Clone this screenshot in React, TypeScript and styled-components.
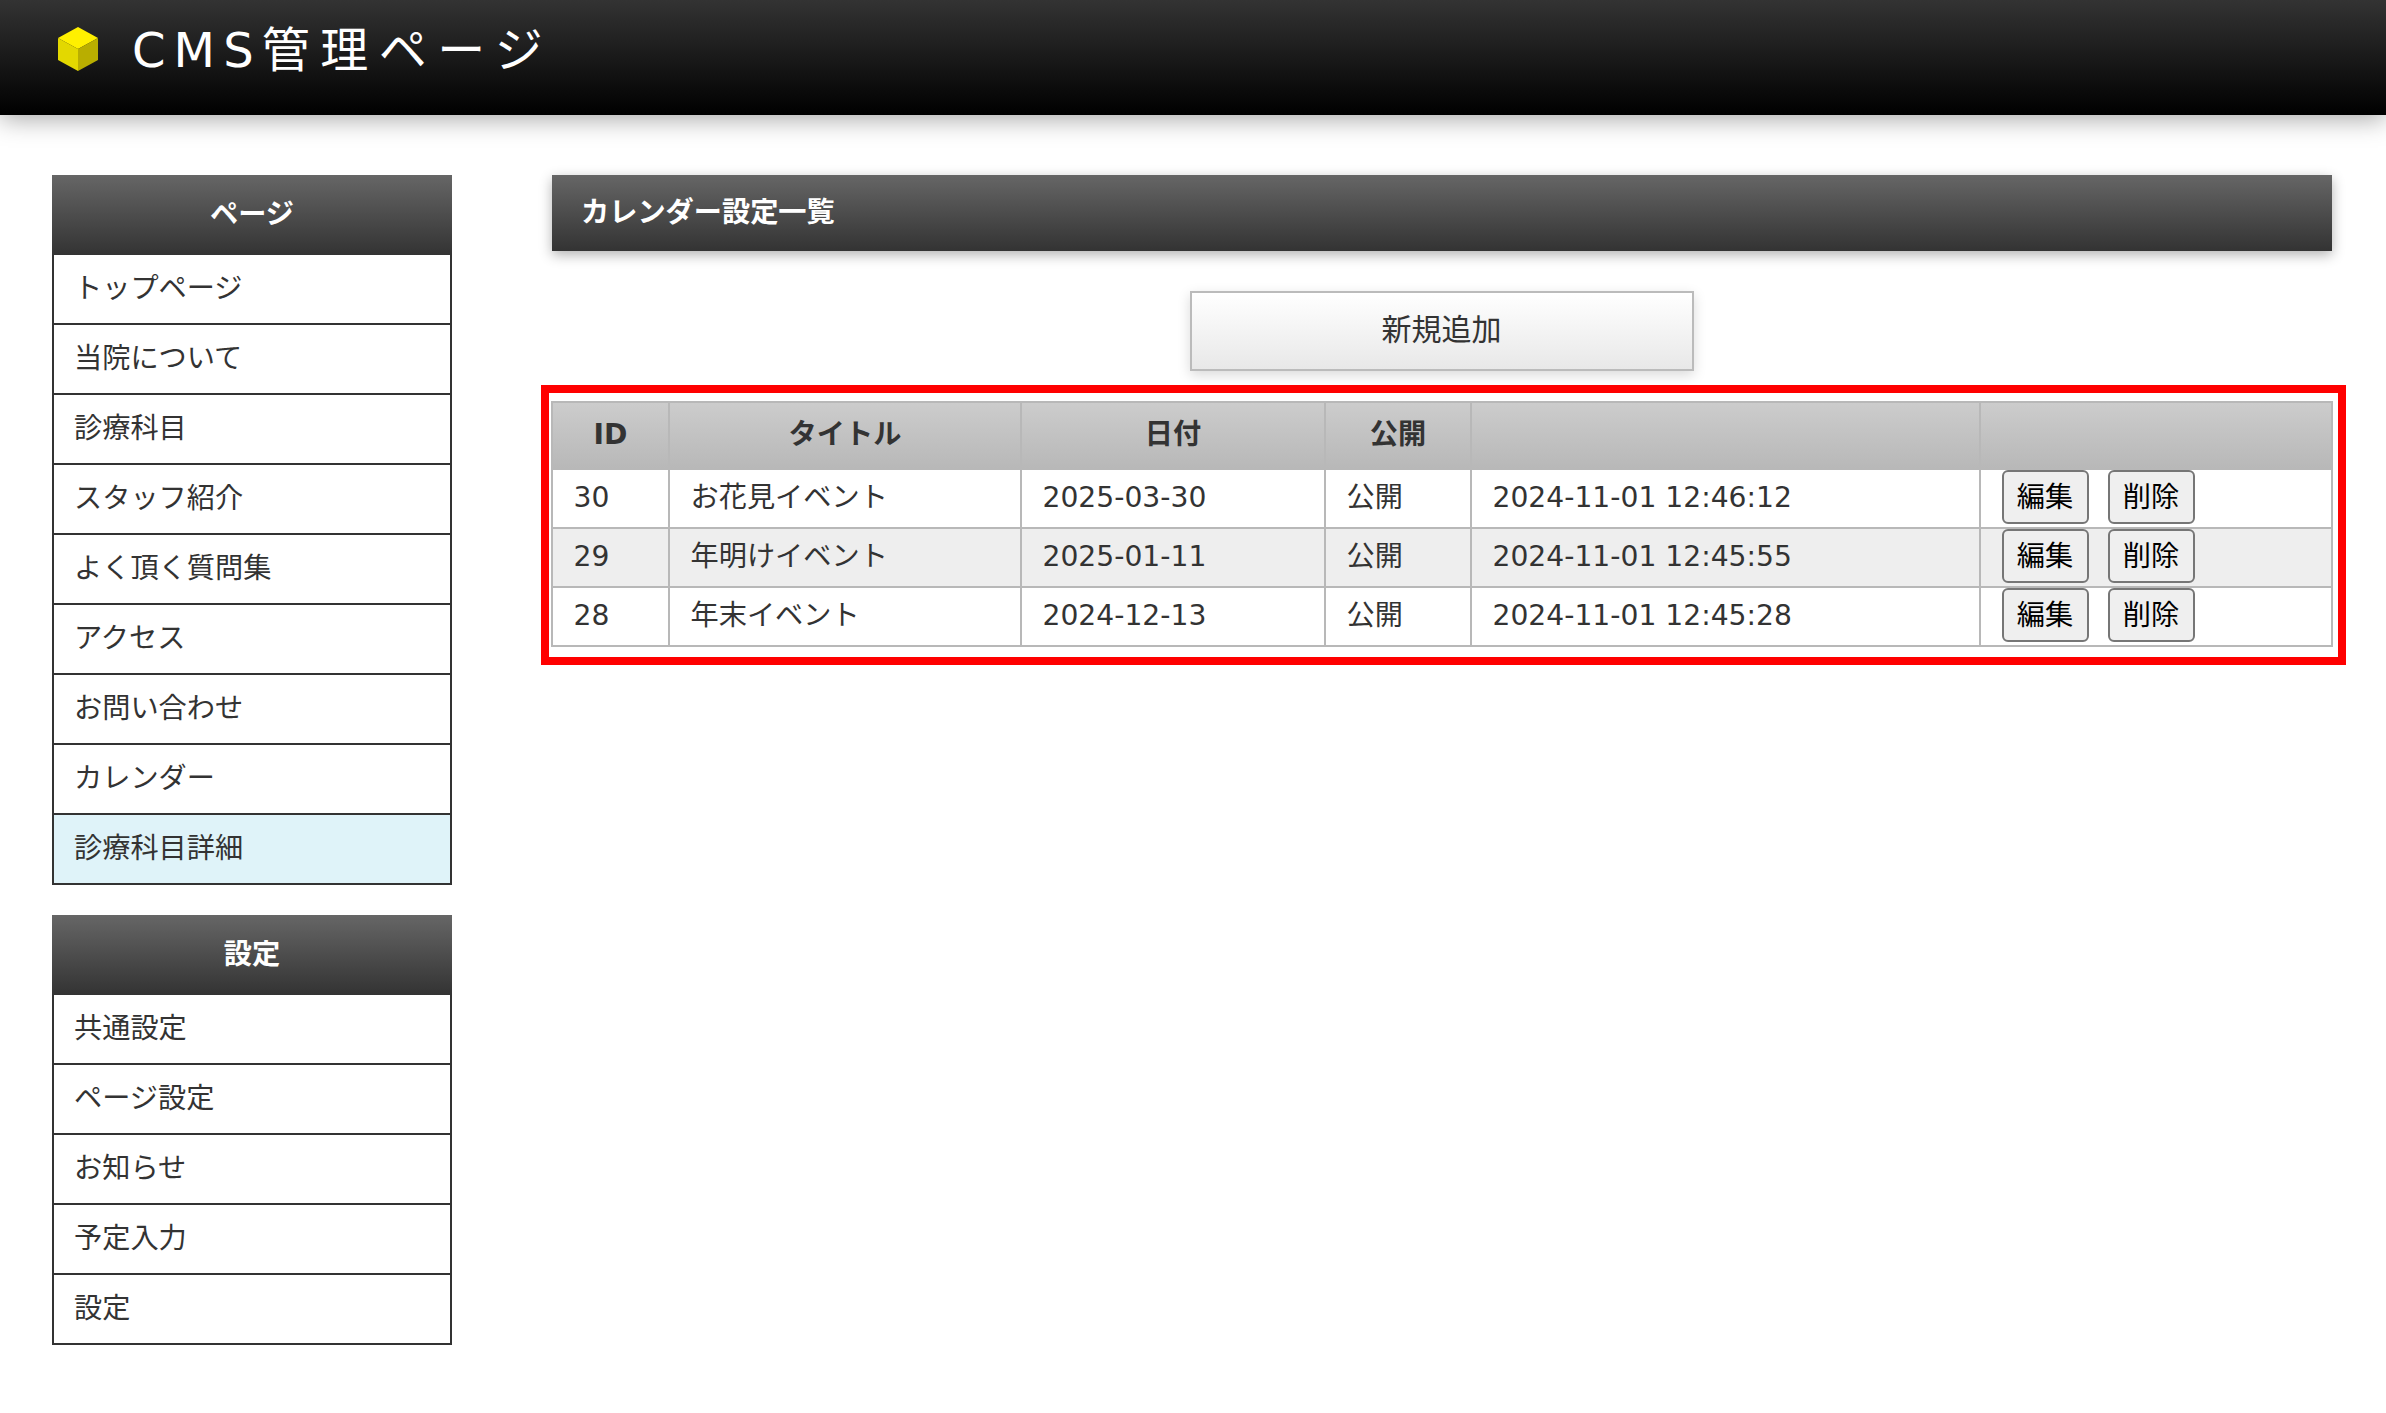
import styled, { createGlobalStyle } from "styled-components";

const FONT = `"DejaVu Sans", "Noto Sans CJK JP", sans-serif`;

const GlobalStyle = createGlobalStyle`
  html, body {
    margin: 0;
    padding: 0;
    background: #fff;
  }
  body {
    font-family: ${FONT};
    font-size: 28.2px;
    color: #333;
  }
`;

const Header = styled.header`
  display: flex;
  align-items: flex-start;
  height: 115px;
  padding: 27px 0 0 58px;
  box-sizing: border-box;
  background: linear-gradient(#333, #000);
  box-shadow: 0 4px 24px rgba(0, 0, 0, 0.35);
`;

const SiteTitle = styled.h1`
  margin: -3px 0 0 34px;
  font-size: 48px;
  line-height: 52px;
  font-weight: normal;
  letter-spacing: 10.5px;
  white-space: nowrap;
  color: #fff;
`;

const Latin = styled.span`
  letter-spacing: 8.1px;
`;

const Layout = styled.div`
  display: flex;
  align-items: flex-start;
  padding: 60px 0 0 52px;
`;

const Sidebar = styled.nav`
  display: flex;
  flex-direction: column;
  gap: 30px;
  width: 400px;
  flex-shrink: 0;
`;

const Panel = styled.div`
  border: 2px solid #333;
  border-bottom: 0;
`;

const PanelHead = styled.div`
  height: 78px;
  line-height: 76px;
  margin: -2px -2px 0;
  padding-top: 2px;
  text-align: center;
  font-weight: bold;
  color: #fff;
  background: linear-gradient(#666, #333);
`;

const NavItem = styled.a<{ $active?: boolean }>`
  display: block;
  height: 70px;
  line-height: 67px;
  padding-left: 20px;
  box-sizing: border-box;
  border-bottom: 2px solid #333;
  color: #333;
  text-decoration: none;
  background: ${(p) => (p.$active ? "#dff3f9" : "#fff")};
`;

const Main = styled.main`
  width: 1805px;
  margin-left: 89px;
  flex-shrink: 0;
`;

const PageTitle = styled.h2`
  height: 76px;
  margin: 0 14px 0 11px;
  padding-left: 29px;
  font-size: 28.2px;
  line-height: 75px;
  font-weight: bold;
  color: #fff;
  background: linear-gradient(#666, #333);
  box-shadow: 0 4px 12px rgba(0, 0, 0, 0.3);
`;

const AddButton = styled.a`
  display: block;
  width: 504px;
  height: 80px;
  margin: 40px auto 14px;
  position: relative;
  left: -2px;
  box-sizing: border-box;
  border: 2px solid #bbb;
  font-size: 30px;
  line-height: 73px;
  text-align: center;
  color: #333;
  background: linear-gradient(#fff, #e8e8e8);
  box-shadow: 0 4px 12px rgba(0, 0, 0, 0.15);
`;

const Highlight = styled.div`
  border: 8px solid #f00;
  padding: 8px 7px 10px 2px;
`;

const Table = styled.table`
  width: 1780px;
  table-layout: fixed;
  border-collapse: collapse;
`;

const Th = styled.th`
  height: 67px;
  padding: 0 0 1px;
  box-sizing: border-box;
  border: 2px solid #b8b8b8;
  font-weight: bold;
  line-height: 40px;
  text-align: center;
  color: #333;
  background: linear-gradient(#ccc, #b8b8b8);
`;

const Row = styled.tr<{ $even?: boolean }>`
  background: ${(p) => (p.$even ? "#eee" : "#fff")};
`;

const Td = styled.td`
  height: 55px;
  padding: 0 21px 2px 20.5px;
  border: 2px solid #b8b8b8;
  line-height: 40px;
  white-space: nowrap;
`;

const ActionCell = styled(Td)`
  vertical-align: top;
  padding: 0 21px 0 20.5px;
`;

const Actions = styled.div`
  display: flex;
  gap: 19px;
`;

const SmallButton = styled.button`
  width: 87px;
  height: 54px;
  padding: 2px 0 0;
  border: 2px solid #767676;
  border-radius: 6px;
  background: #efefef;
  color: #000;
  font-family: ${FONT};
  font-size: 28.2px;
  line-height: 1;
`;

const Cube = styled.svg`
  flex-shrink: 0;
  filter: blur(0.6px);
`;

const pages = [
  "トップページ",
  "当院について",
  "診療科目",
  "スタッフ紹介",
  "よく頂く質問集",
  "アクセス",
  "お問い合わせ",
  "カレンダー",
  "診療科目詳細",
];

const settings = ["共通設定", "ページ設定", "お知らせ", "予定入力", "設定"];

const columns = [117, 352, 304, 146, 509, 352];

const events = [
  { id: 30, title: "お花見イベント", date: "2025-03-30", status: "公開", updated: "2024-11-01 12:46:12" },
  { id: 29, title: "年明けイベント", date: "2025-01-11", status: "公開", updated: "2024-11-01 12:45:55" },
  { id: 28, title: "年末イベント", date: "2024-12-13", status: "公開", updated: "2024-11-01 12:45:28" },
];

const CubeIcon = () => (
  <Cube width="40" height="44" viewBox="0 0 40 44">
    <polygon points="20,0 40,11 20,22 0,11" fill="#fff000" />
    <polygon points="0,11 20,22 20,44 0,33" fill="#e3d800" />
    <polygon points="40,11 20,22 20,44 40,33" fill="#b9ae00" />
  </Cube>
);

const App = () => {
  return (
    <>
      <GlobalStyle />
      <Header>
        <CubeIcon />
        <SiteTitle>
          <Latin>CMS</Latin>管理ページ
        </SiteTitle>
      </Header>
      <Layout>
        <Sidebar>
          <Panel>
            <PanelHead>ページ</PanelHead>
            {pages.map((name, i) => (
              <NavItem key={name} $active={i === pages.length - 1}>
                {name}
              </NavItem>
            ))}
          </Panel>
          <Panel>
            <PanelHead>設定</PanelHead>
            {settings.map((name) => (
              <NavItem key={name}>{name}</NavItem>
            ))}
          </Panel>
        </Sidebar>
        <Main>
          <PageTitle>カレンダー設定一覧</PageTitle>
          <AddButton>新規追加</AddButton>
          <Highlight>
            <Table>
              <colgroup>
                {columns.map((w, i) => (
                  <col key={i} width={w} />
                ))}
              </colgroup>
              <thead>
                <tr>
                  <Th>ID</Th>
                  <Th>タイトル</Th>
                  <Th>日付</Th>
                  <Th>公開</Th>
                  <Th />
                  <Th />
                </tr>
              </thead>
              <tbody>
                {events.map((ev, i) => (
                  <Row key={ev.id} $even={i % 2 === 1}>
                    <Td>{ev.id}</Td>
                    <Td>{ev.title}</Td>
                    <Td>{ev.date}</Td>
                    <Td>{ev.status}</Td>
                    <Td>{ev.updated}</Td>
                    <ActionCell>
                      <Actions>
                        <SmallButton>編集</SmallButton>
                        <SmallButton>削除</SmallButton>
                      </Actions>
                    </ActionCell>
                  </Row>
                ))}
              </tbody>
            </Table>
          </Highlight>
        </Main>
      </Layout>
    </>
  );
};

export default App;
